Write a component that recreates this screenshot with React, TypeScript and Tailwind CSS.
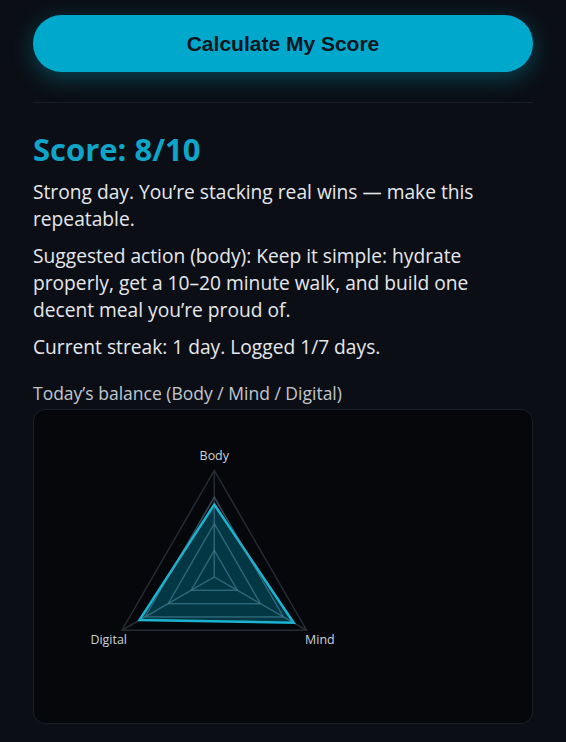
import React from 'react';

const axes = [
  { label: 'Body', angle: -90, value: 0.68 },
  { label: 'Mind', angle: 30, value: 0.86 },
  { label: 'Digital', angle: 150, value: 0.81 },
];

const CX = 181;
const CY = 167;
const R = 107;

const xy = (angle: number, r: number) => {
  const rad = (angle * Math.PI) / 180;
  return [CX + Math.cos(rad) * r, CY + Math.sin(rad) * r];
};

const pts = (r: (a: (typeof axes)[number]) => number) =>
  axes.map((a) => xy(a.angle, r(a)).map((n) => n.toFixed(1)).join(',')).join(' ');

const BalanceChart: React.FC = () => {
  const levels = [0.25, 0.5, 0.75, 1];

  return (
    <svg viewBox="0 0 500 313" className="block w-full h-full">
      {levels.map((l) => (
        <polygon key={l} points={pts(() => l * R)} fill="none" stroke="#262b34" strokeWidth={1.5} />
      ))}
      {axes.map((a) => {
        const [x, y] = xy(a.angle, R);
        return <line key={a.label} x1={CX} y1={CY} x2={x} y2={y} stroke="#262b34" strokeWidth={1.5} />;
      })}
      <polygon
        points={pts((a) => a.value * R)}
        fill="rgba(0,170,204,0.3)"
        stroke="#1ab3d1"
        strokeWidth={2.5}
      />
      {levels.slice(0, 3).map((l) => (
        <polygon
          key={`inner-${l}`}
          points={pts(() => l * R)}
          fill="none"
          stroke="rgba(90,150,165,0.35)"
          strokeWidth={1.2}
        />
      ))}
      {axes.map((a) => {
        const [x, y] = xy(a.angle, a.value * R);
        return (
          <line
            key={`in-${a.label}`}
            x1={CX}
            y1={CY}
            x2={x}
            y2={y}
            stroke="rgba(90,150,165,0.35)"
            strokeWidth={1.2}
          />
        );
      })}
      <g fill="#cdd1d8" fontSize="12.5" fontFamily="'Open Sans', sans-serif" textAnchor="middle">
        <text x={181} y={50}>Body</text>
        <text x={287} y={234}>Mind</text>
        <text x={75} y={234}>Digital</text>
      </g>
    </svg>
  );
};

const App: React.FC = () => {
  return (
    <div className="min-h-screen bg-[#0b0f15] px-[33px] pt-[15px] pb-4 font-['Open_Sans',sans-serif]">
      <button className="w-full h-[57px] rounded-full bg-[#00a8cc] text-[#0a1520] text-[21px] font-bold font-['Liberation_Sans',Arial,sans-serif] shadow-[0_6px_22px_rgba(0,168,204,0.35)]">
        Calculate My Score
      </button>

      <div className="mt-[30px] border-t border-[#1a1f27]" />

      <h2 className="mt-[27px] text-[31px] leading-[38px] font-bold text-[#0ea5c9]">Score: 8/10</h2>

      <div className="mt-[10px] max-w-[480px] space-y-[10px] text-[19.2px] leading-[27px] text-[#e6e8ec]">
        <p>Strong day. You’re stacking real wins — make this repeatable.</p>
        <p>
          Suggested action (body): Keep it simple: hydrate properly, get a 10–20 minute walk, and build one decent
          meal you’re proud of.
        </p>
        <p>Current streak: 1 day. Logged 1/7 days.</p>
      </div>

      <p className="mt-[21px] text-[17.5px] leading-[24px] text-[#c3c7ce]">Today’s balance (Body / Mind / Digital)</p>

      <div className="mt-[4px] h-[315px] rounded-xl border border-[#1a1f27] bg-[#05070a] overflow-hidden">
        <BalanceChart />
      </div>
    </div>
  );
};

export default App;
